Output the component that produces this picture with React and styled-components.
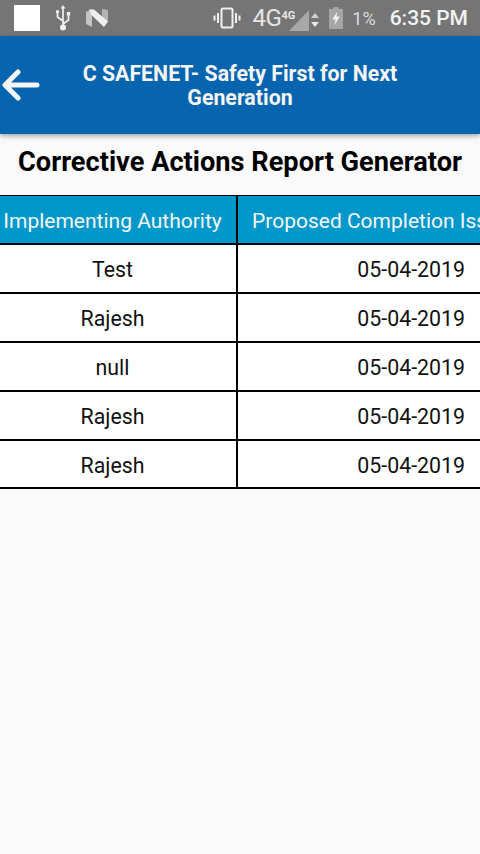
import React from 'react';
import styled, { createGlobalStyle } from 'styled-components';

const GlobalStyle = createGlobalStyle`
  html, body {
    margin: 0;
    padding: 0;
    background: #fafafa;
  }
  * {
    box-sizing: border-box;
  }
`;

const Screen = styled.div`
  width: 480px;
  height: 854px;
  overflow: hidden;
  background: #fafafa;
  font-family: Roboto, "Liberation Sans", sans-serif;
`;

const StatusBar = styled.div`
  display: flex;
  align-items: center;
  height: 36px;
  padding: 0 12px 0 14px;
  background: #757575;
  color: #f2f2f2;
`;

const StatusLeft = styled.div`
  display: flex;
  align-items: center;
  gap: 14px;
  flex: 1;
`;

const WhiteSquare = styled.div`
  width: 26px;
  height: 26px;
  background: #fff;
`;

const StatusRight = styled.div`
  display: flex;
  align-items: center;
`;

const NetworkText = styled.span`
  font-size: 24px;
  margin-left: 11px;
  letter-spacing: -0.4px;
  color: #e6e6e6;
`;

const NetworkSmall = styled.span`
  font-size: 11px;
  font-weight: 700;
  align-self: flex-start;
  margin-top: 5px;
  color: #e6e6e6;
`;

const BatteryText = styled.span`
  font-size: 18px;
  margin-left: 9px;
  color: #dcdcdc;
`;

const Clock = styled.span`
  font-size: 21px;
  font-weight: 500;
  margin-left: 14px;
`;

const SignalSvg = styled.svg`
  margin: 6px 0 0 -6px;
  align-self: flex-start;
`;

const ArrowsSvg = styled.svg`
  margin: 4px 0 0 1px;
`;

const BatterySvg = styled.svg`
  margin-left: 9px;
`;

const AppBar = styled.div`
  position: relative;
  display: flex;
  align-items: center;
  height: 98px;
  background: #0765af;
  box-shadow: 0 2px 5px rgba(0, 0, 0, 0.35);
`;

const BackButton = styled.div`
  display: flex;
  flex: 0 0 60px;
  padding-left: 2px;
`;

const AppTitle = styled.div`
  width: 360px;
  padding-top: 1px;
  color: #f5f5f5;
  font-size: 21.33px;
  font-weight: 700;
  line-height: 24px;
  text-align: center;
`;

const PageTitle = styled.h1`
  margin: 0;
  height: 61px;
  padding-top: 11px;
  color: #000;
  font-size: 27.2px;
  font-weight: 700;
  line-height: 35px;
  text-align: center;
  white-space: nowrap;
`;

const Table = styled.div`
  border-top: 1px solid #000;
`;

const Row = styled.div`
  display: grid;
  grid-template-columns: 238px 242px;
  height: 49px;
  border-bottom: 2px solid #000;
  background: ${(p) => (p.$head ? '#0098ca' : '#fff')};
  color: ${(p) => (p.$head ? '#f5f5f5' : '#111')};
  font-size: ${(p) => (p.$head ? '21px' : '21.33px')};
  white-space: nowrap;
  &:last-child {
    height: 48px;
  }
`;

const AuthorityCell = styled.div`
  display: flex;
  align-items: center;
  justify-content: center;
  padding: 2px 11px 0 0;
  border-right: 2px solid #000;
  overflow: hidden;
`;

const DateCell = styled.div`
  display: flex;
  align-items: center;
  justify-content: ${(p) => (p.$head ? 'flex-start' : 'flex-end')};
  padding: ${(p) => (p.$head ? '2px 0 0 14px' : '2px 15px 0 0')};
  overflow: hidden;
`;

const UsbIcon = () => (
  <svg width="18" height="26" viewBox="0 0 18 26" fill="none">
    <path d="M9 2v20M9 16L3.5 12V8M9 19l5.5-4v-5" stroke="#f0f0f0" strokeWidth="1.7" />
    <path d="M9 0l2.4 3.5H6.6z" fill="#f0f0f0" />
    <rect x="1.8" y="5" width="3.4" height="3.4" rx="1.7" fill="#f0f0f0" />
    <rect x="12.8" y="7" width="3.4" height="3.4" fill="#f0f0f0" />
    <circle cx="9" cy="22.5" r="3" fill="#f0f0f0" />
  </svg>
);

const NougatIcon = () => (
  <svg width="22" height="18" viewBox="0 0 22 18">
    <path d="M0 3L6 0v18l-6-3z" fill="#c4c4c4" />
    <path d="M16 0l6 1v12l-6-4z" fill="#b4b4b4" />
    <path d="M3 0.5h5L22 12.5 18 18 6 6.5z" fill="#efefef" />
  </svg>
);

const VibrateIcon = () => (
  <svg width="28" height="22" viewBox="0 0 28 22" fill="none" stroke="#f0f0f0">
    <rect x="8.5" y="1.5" width="11" height="19" rx="1.5" strokeWidth="2" />
    <path d="M5 6v10M1.5 8.5v5M23 6v10M26.5 8.5v5" strokeWidth="2" />
  </svg>
);

const SignalIcon = () => (
  <SignalSvg width="20" height="21" viewBox="0 0 20 21">
    <path d="M0 21L20 0v21z" fill="#a8a8a8" />
  </SignalSvg>
);

const ArrowsIcon = () => (
  <ArrowsSvg width="10" height="14" viewBox="0 0 10 14">
    <path d="M5 0l4 5H1z" fill="#d0d0d0" />
    <path d="M5 14l4-5H1z" fill="#e8e8e8" />
  </ArrowsSvg>
);

const BatteryIcon = () => (
  <BatterySvg width="14" height="22" viewBox="0 0 13 23" preserveAspectRatio="none">
    <path d="M4 0h5v2h4v21H0V2h4z" fill="#a6a6a6" />
    <path d="M7.5 5L3 13h3l-1 6 5-9H7z" fill="#f0f0f0" />
  </BatterySvg>
);

const BackArrow = () => (
  <svg width="38" height="32" viewBox="0 0 38 32" fill="none" stroke="#f5f5f5" strokeWidth="5" strokeLinecap="round" strokeLinejoin="round">
    <path d="M35 16H4M16 3L3 16l13 13" />
  </svg>
);

const reports = [
  { authority: 'Test', date: '05-04-2019' },
  { authority: 'Rajesh', date: '05-04-2019' },
  { authority: 'null', date: '05-04-2019' },
  { authority: 'Rajesh', date: '05-04-2019' },
  { authority: 'Rajesh', date: '05-04-2019' },
];

export default function App() {
  return (
    <Screen>
      <GlobalStyle />
      <StatusBar>
        <StatusLeft>
          <WhiteSquare />
          <UsbIcon />
          <NougatIcon />
        </StatusLeft>
        <StatusRight>
          <VibrateIcon />
          <NetworkText>4G</NetworkText>
          <NetworkSmall>4G</NetworkSmall>
          <SignalIcon />
          <ArrowsIcon />
          <BatteryIcon />
          <BatteryText>1%</BatteryText>
          <Clock>6:35 PM</Clock>
        </StatusRight>
      </StatusBar>
      <AppBar>
        <BackButton>
          <BackArrow />
        </BackButton>
        <AppTitle>C SAFENET- Safety First for Next Generation</AppTitle>
      </AppBar>
      <PageTitle>Corrective Actions Report Generator</PageTitle>
      <Table>
        <Row $head>
          <AuthorityCell>Implementing Authority</AuthorityCell>
          <DateCell $head>Proposed Completion Iss</DateCell>
        </Row>
        {reports.map((report, index) => (
          <Row key={index}>
            <AuthorityCell>{report.authority}</AuthorityCell>
            <DateCell>{report.date}</DateCell>
          </Row>
        ))}
      </Table>
    </Screen>
  );
}
